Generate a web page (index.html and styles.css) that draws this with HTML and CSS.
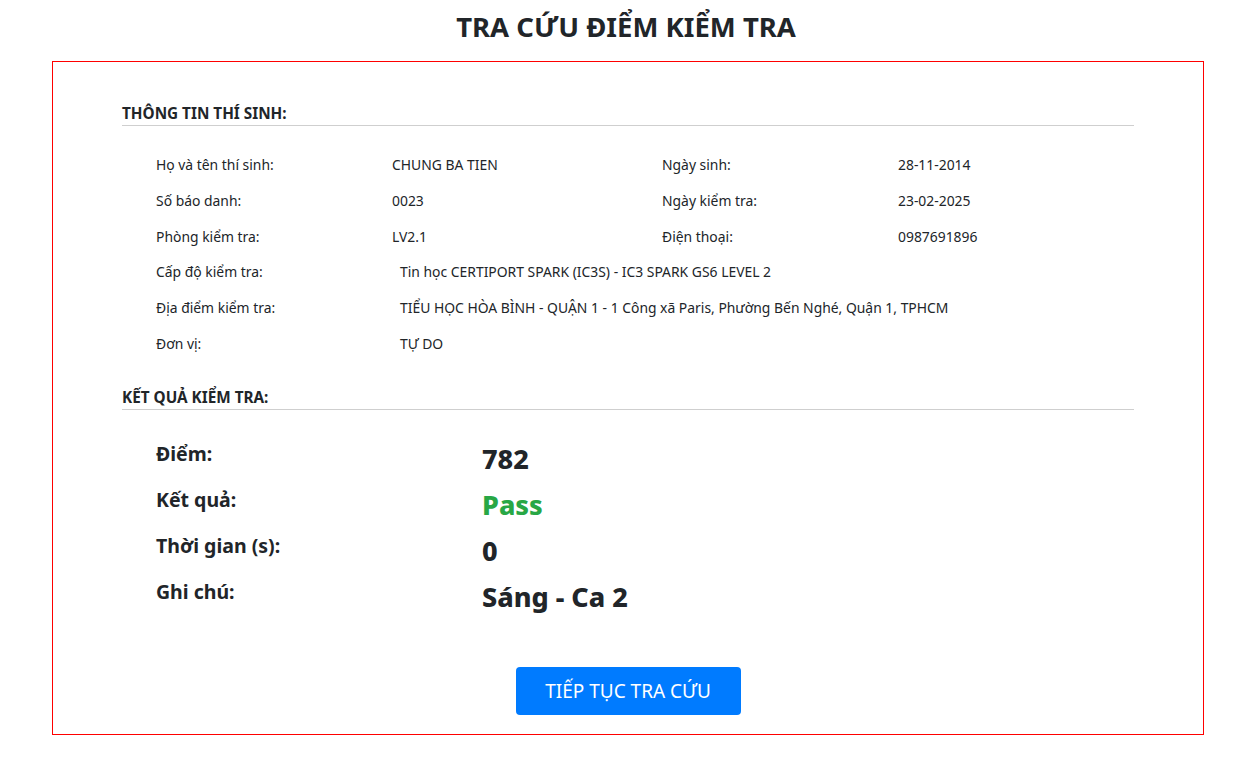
FILE: index.html
```html
<!DOCTYPE html>
<html lang="vi">
<head>
<meta charset="utf-8">
<title>Tra cứu điểm kiểm tra</title>
<link rel="stylesheet" href="styles.css">
</head>
<body>
  <h1 class="page-title">TRA CỨU ĐIỂM KIỂM TRA</h1>
  <div class="result-box">
    <div class="section-title">THÔNG TIN THÍ SINH:</div>
    <div class="info">
      <div class="info-row two">
        <span>Họ và tên thí sinh:</span><span>CHUNG BA TIEN</span>
        <span>Ngày sinh:</span><span>28-11-2014</span>
      </div>
      <div class="info-row two">
        <span>Số báo danh:</span><span>0023</span>
        <span>Ngày kiểm tra:</span><span>23-02-2025</span>
      </div>
      <div class="info-row two">
        <span>Phòng kiểm tra:</span><span>LV2.1</span>
        <span>Điện thoại:</span><span>0987691896</span>
      </div>
      <div class="info-row one">
        <span>Cấp độ kiểm tra:</span><span>Tin học CERTIPORT SPARK (IC3S) - IC3 SPARK GS6 LEVEL 2</span>
      </div>
      <div class="info-row one">
        <span>Địa điểm kiểm tra:</span><span>TIỂU HỌC HÒA BÌNH - QUẬN 1 - 1 Công xã Paris, Phường Bến Nghé, Quận 1, TPHCM</span>
      </div>
      <div class="info-row one">
        <span>Đơn vị:</span><span>TỰ DO</span>
      </div>
    </div>
    <div class="section-title second">KẾT QUẢ KIỂM TRA:</div>
    <div class="results">
      <div class="res-row"><span class="res-label">Điểm:</span><span class="res-value">782</span></div>
      <div class="res-row"><span class="res-label">Kết quả:</span><span class="res-value pass">Pass</span></div>
      <div class="res-row"><span class="res-label">Thời gian (s):</span><span class="res-value">0</span></div>
      <div class="res-row"><span class="res-label">Ghi chú:</span><span class="res-value">Sáng - Ca 2</span></div>
    </div>
    <div class="actions">
      <button class="btn-primary" type="button">TIẾP TỤC TRA CỨU</button>
    </div>
  </div>
</body>
</html>
```

FILE: styles.css
```css
* { box-sizing: border-box; }
body {
  margin: 0;
  font-family: "Noto Sans", "Open Sans", sans-serif;
  color: #212529;
  background: #fff;
}
.page-title {
  margin: 8px 0 15px;
  text-align: center;
  font-size: 27.5px;
  line-height: 38px;
  font-weight: 700;
}
.result-box {
  width: 1152px;
  margin-left: 52px;
  border: 1px solid #ff0000;
  padding: 42px 69px 19px;
}
.section-title {
  font-size: 15.3px;
  line-height: 18px;
  font-weight: 700;
  padding-bottom: 3px;
  border-bottom: 1px solid #cfcfcf;
}
.section-title.second { margin-top: 26px; }
.info {
  margin-top: 21px;
  padding-left: 34px;
  font-size: 13.9px;
}
.info-row {
  display: grid;
  height: 35.8px;
  line-height: 35.8px;
  white-space: nowrap;
}
.info-row.two { grid-template-columns: 236px 270px 236px 1fr; }
.info-row.one { grid-template-columns: 244px 1fr; }
.results {
  margin-top: 32px;
  padding-left: 34px;
}
.res-row {
  display: grid;
  grid-template-columns: 326px 1fr;
  align-items: start;
  height: 46px;
}
.res-label {
  font-size: 19.5px;
  line-height: 24px;
  font-weight: 700;
}
.res-value {
  font-size: 27px;
  line-height: 34px;
  font-weight: 800;
}
.res-value.pass { color: #28a745; }
.actions {
  display: flex;
  justify-content: center;
  margin-top: 41px;
}
.btn-primary {
  display: inline-flex;
  align-items: center;
  justify-content: center;
  width: 225px;
  height: 48px;
  background: #007bff;
  color: #fff;
  border: none;
  border-radius: 4px;
  font-family: "Noto Sans", "Open Sans", sans-serif;
  font-size: 19px;
  cursor: pointer;
}
```
